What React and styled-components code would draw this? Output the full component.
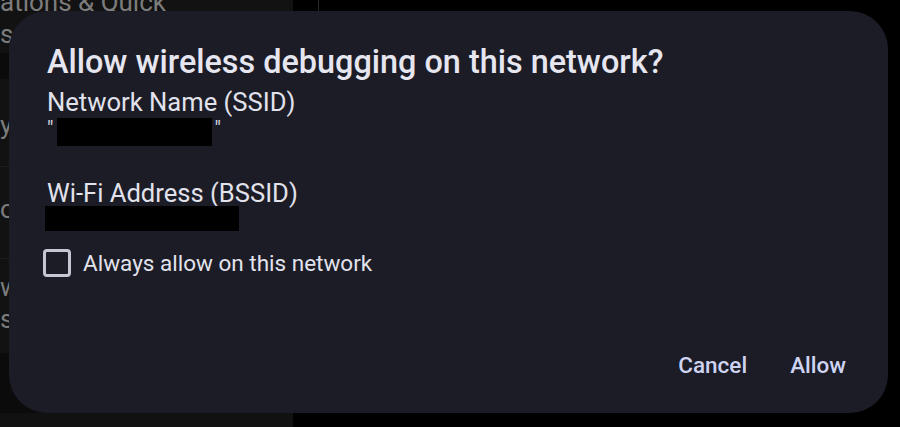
import React from "react";
import styled, { createGlobalStyle } from "styled-components";

const Global = createGlobalStyle`
  html, body { margin: 0; padding: 0; background: #000; }
  body { font-family: Roboto, "Noto Sans", sans-serif; }
`;

const Screen = styled.div`
  position: relative;
  width: 900px;
  height: 427px;
  overflow: hidden;
  background: #000;
  display: flex;
`;

const SidePanel = styled.div`
  width: 293px;
  height: 100%;
  background: #111;
  display: flex;
  flex-direction: column;
`;

const SideRow = styled.div`
  height: ${(p) => p.$h}px;
  flex-shrink: 0;
  background: ${(p) => (p.$dark ? "#0b0b0b" : "#121212")};
  border-bottom: ${(p) => (p.$line ? "1px solid #1e1e1e" : "none")};
  color: #7c7c7c;
  font-size: 26px;
  line-height: 32px;
  padding-top: ${(p) => p.$pt || 0}px;
  margin-top: ${(p) => p.$mt || 0}px;
  box-sizing: border-box;
  overflow: hidden;
  white-space: nowrap;
`;

const RightArea = styled.div`
  flex: 1;
  height: 100%;
  background: #000;
`;

const Divider = styled.div`
  margin-left: 25px;
  width: 1px;
  height: 12px;
  background: #2a2a2a;
`;

const Dialog = styled.div`
  position: absolute;
  left: 9px;
  top: 11px;
  width: 879px;
  height: 402px;
  box-sizing: border-box;
  background: #1b1c26;
  border-radius: 38px;
  padding: 33px 42px 0 38px;
  display: flex;
  flex-direction: column;
  color: #e4e4ee;
`;

const Title = styled.h1`
  margin: 0;
  font-family: Roboto, sans-serif;
  font-weight: 500;
  font-size: 32.4px;
  line-height: 36px;
  color: #e6e6f0;
  white-space: nowrap;
`;

const Label = styled.div`
  margin-top: ${(p) => p.$mt || 0}px;
  font-size: 25.6px;
  line-height: 32px;
  color: #e2e2ec;
  white-space: nowrap;
`;

const ValueLine = styled.div`
  display: flex;
  align-items: flex-start;
  height: 30px;
  font-size: 20px;
  color: #d8d8e2;
  line-height: 20px;
`;

const Redacted = styled.div`
  width: ${(p) => p.$w}px;
  height: ${(p) => p.$h}px;
  background: #000;
  margin: ${(p) => p.$m || "0"};
`;

const CheckRow = styled.label`
  display: flex;
  align-items: center;
  margin-top: ${(p) => p.$mt || 0}px;
  margin-left: -4px;
  gap: 12px;
  font-size: 22.5px;
  line-height: 28px;
  color: #e2e2ec;
  white-space: nowrap;
`;

const Box = styled.span`
  width: 22px;
  height: 22px;
  border: 3px solid #c6c6d2;
  border-radius: 4px;
  display: inline-block;
`;

const Actions = styled.div`
  margin-top: auto;
  margin-bottom: 35px;
  display: flex;
  justify-content: flex-end;
  gap: 43px;
`;

const ActionButton = styled.button`
  background: none;
  border: none;
  padding: 0;
  font-family: Roboto, sans-serif;
  font-weight: 500;
  font-size: 22.5px;
  line-height: 26px;
  color: #cfd3f2;
  cursor: pointer;
`;

export default function App() {
  return (
    <>
      <Global />
      <Screen>
        <SidePanel>
          <SideRow $h={67} $mt={-14} $pt={0}>
            ations &amp; Quick
            <br />s
          </SideRow>
          <SideRow $h={26} $dark />
          <SideRow $h={88} $line $pt={30}>
            y
          </SideRow>
          <SideRow $h={92} $line $pt={26}>
            o
          </SideRow>
          <SideRow $h={94} $pt={12}>
            w<br />s
          </SideRow>
          <SideRow $h={60} $dark />
        </SidePanel>
        <RightArea>
          <Divider />
        </RightArea>
        <Dialog>
          <Title>Allow wireless debugging on this network?</Title>
          <Label $mt={6}>Network Name (SSID)</Label>
          <ValueLine>
            <span>"</span>
            <Redacted $w={155} $h={28} $m="0 2px 0 4px" />
            <span>"</span>
          </ValueLine>
          <Label $mt={29}>Wi-Fi Address (BSSID)</Label>
          <Redacted $w={194} $h={25} $m="-3px 0 0 -2px" />
          <CheckRow $mt={18}>
            <Box />
            Always allow on this network
          </CheckRow>
          <Actions>
            <ActionButton>Cancel</ActionButton>
            <ActionButton>Allow</ActionButton>
          </Actions>
        </Dialog>
      </Screen>
    </>
  );
}
